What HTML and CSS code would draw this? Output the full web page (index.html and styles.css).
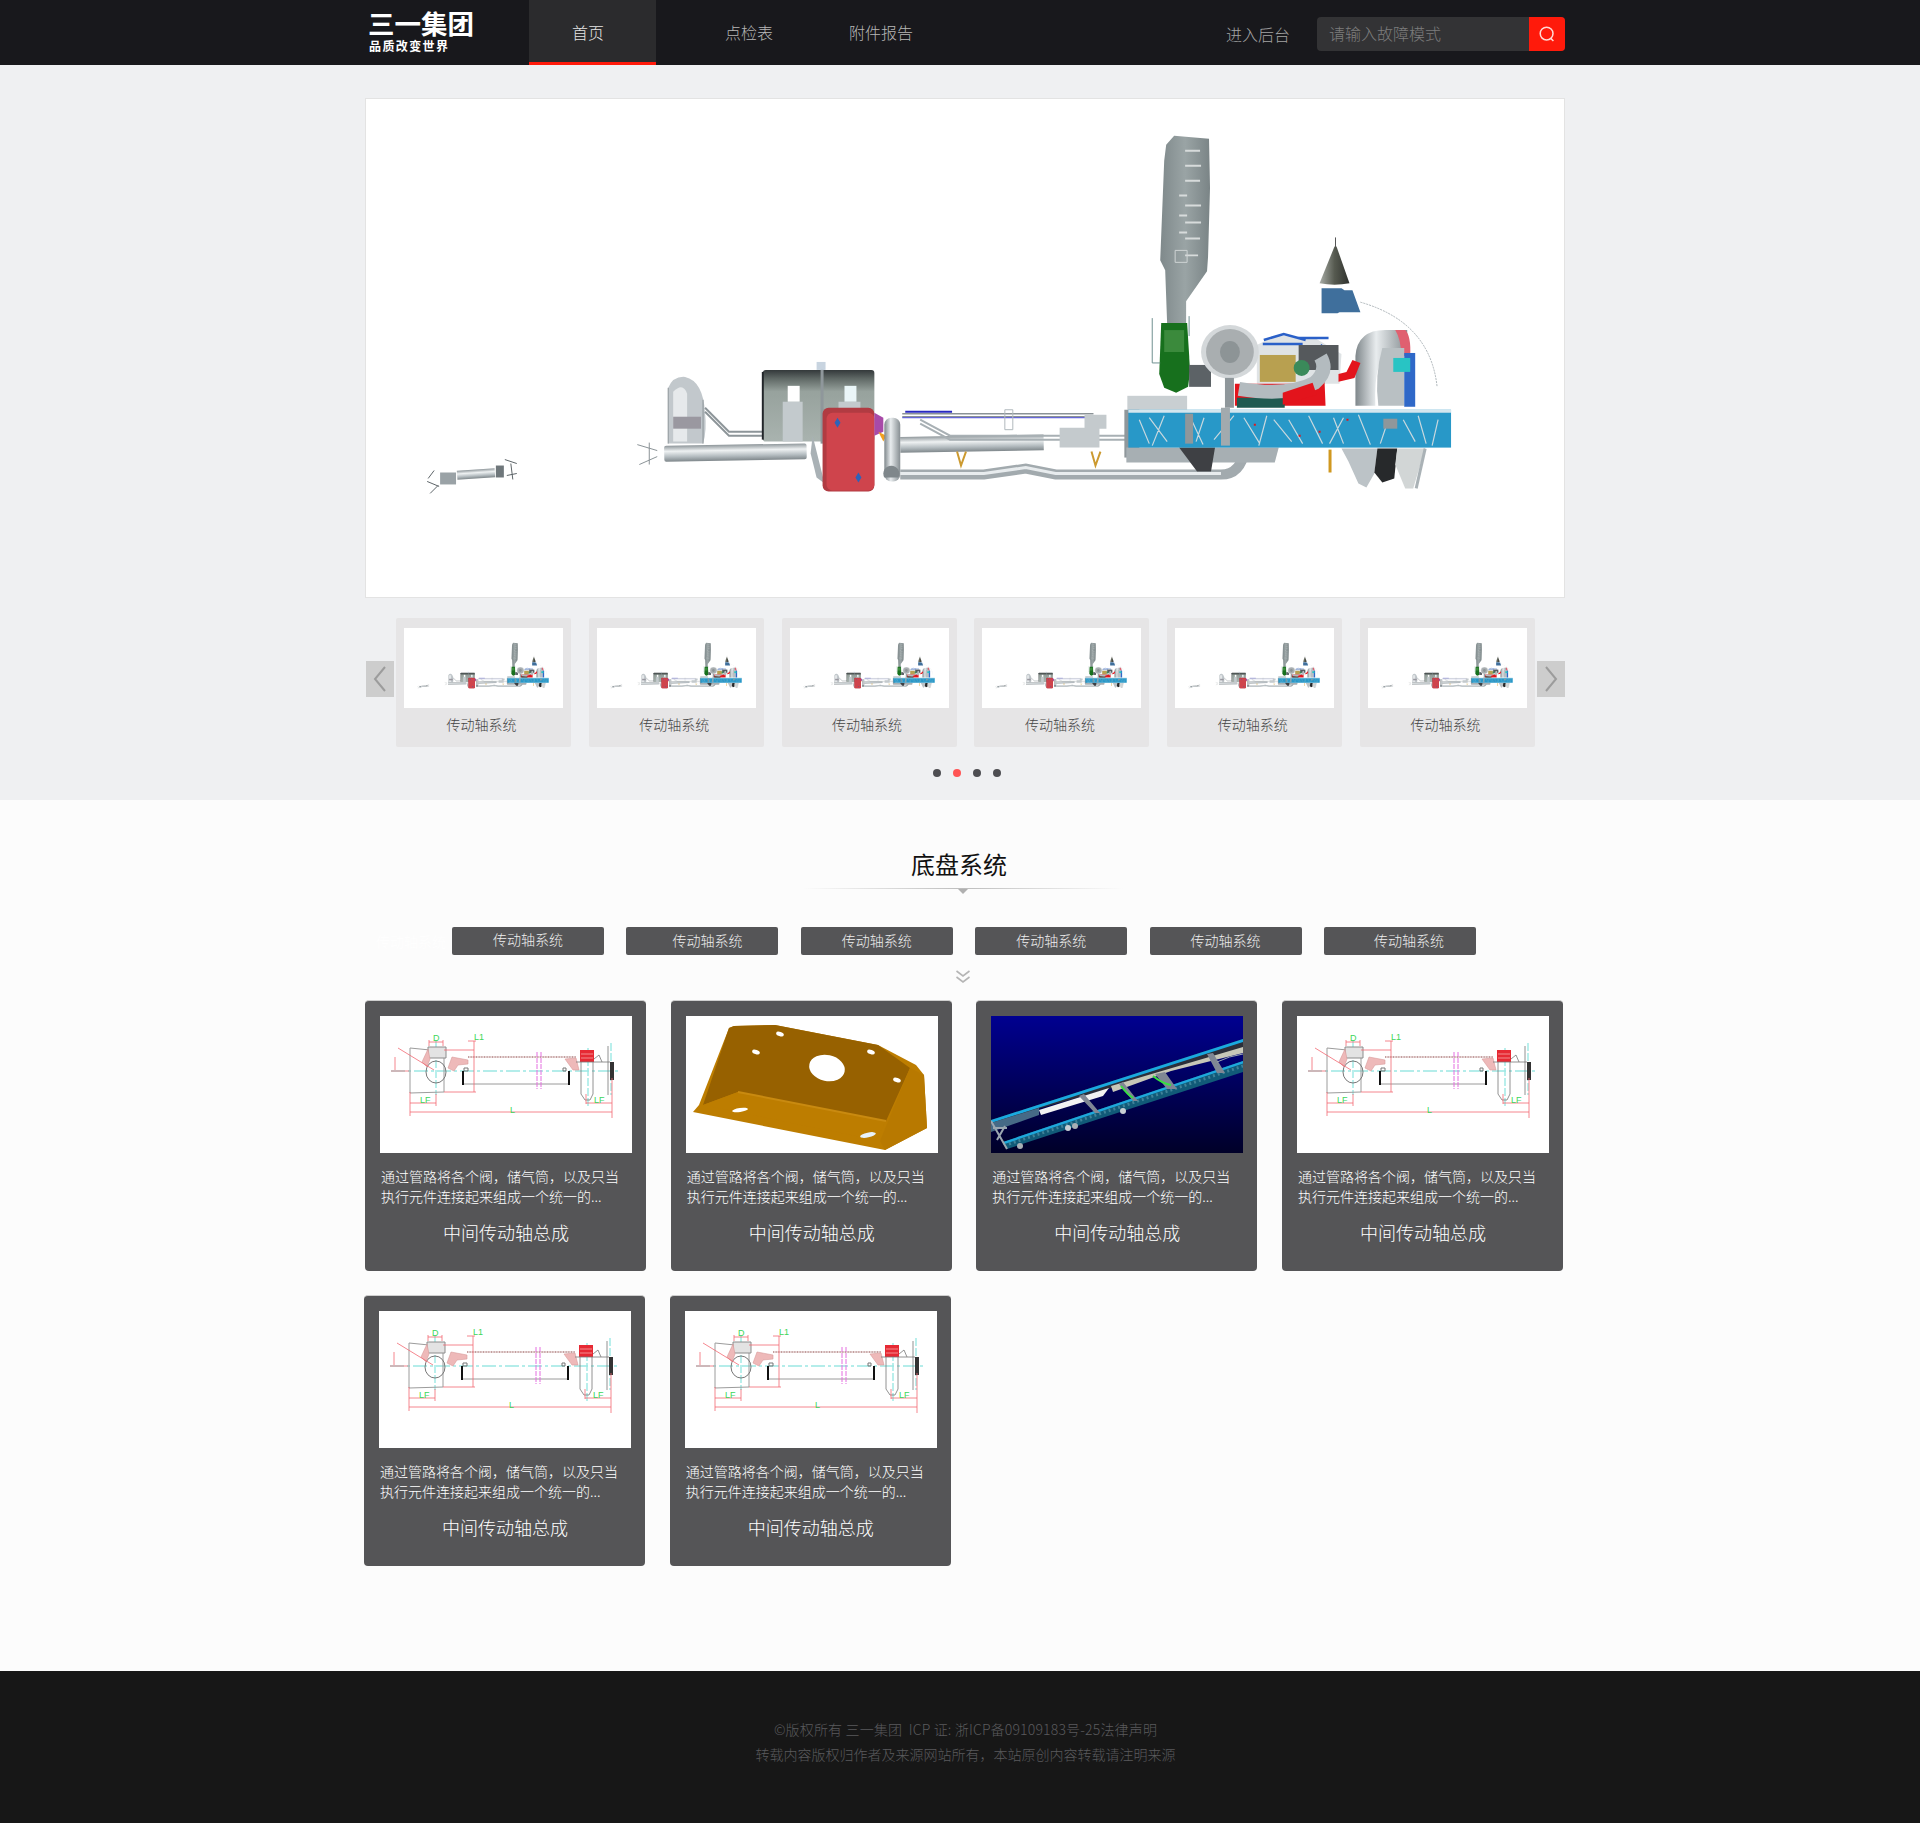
FILE: index.html
```html
<!DOCTYPE html>
<html lang="zh-CN">
<head>
<meta charset="utf-8">
<title>三一集团</title>
<link rel="stylesheet" href="styles.css">
</head>
<body>
<svg class="defs" width="0" height="0" aria-hidden="true">
  <defs>
    <linearGradient id="pipeH" x1="0" y1="0" x2="0" y2="1">
      <stop offset="0" stop-color="#8f979b"/><stop offset=".35" stop-color="#eef1f2"/><stop offset=".7" stop-color="#b4bcc0"/><stop offset="1" stop-color="#7f878b"/>
    </linearGradient>
    <linearGradient id="pipeV" x1="0" y1="0" x2="1" y2="0">
      <stop offset="0" stop-color="#7f878b"/><stop offset=".4" stop-color="#e8ecee"/><stop offset="1" stop-color="#868e92"/>
    </linearGradient>
    <linearGradient id="tank" x1="0" y1="0" x2="0" y2="1">
      <stop offset="0" stop-color="#33383a"/><stop offset=".12" stop-color="#5f6865"/><stop offset=".3" stop-color="#97a29d"/><stop offset="1" stop-color="#a9b3af"/>
    </linearGradient>
    <linearGradient id="stack" x1="0" y1="0" x2="1" y2="0">
      <stop offset="0" stop-color="#7f898b"/><stop offset=".5" stop-color="#9aa4a5"/><stop offset="1" stop-color="#7a8486"/>
    </linearGradient>
    <linearGradient id="cone" x1="0" y1="0" x2="1" y2="0">
      <stop offset="0" stop-color="#a8aca6"/><stop offset=".5" stop-color="#565a50"/><stop offset="1" stop-color="#2f312d"/>
    </linearGradient>
    <linearGradient id="deep" x1="0" y1="0" x2="0" y2="1">
      <stop offset="0" stop-color="#000090"/><stop offset="1" stop-color="#000028"/>
    </linearGradient>

    <symbol id="machine" viewBox="365 98 1200 500">
      <!-- far left shaft -->
      <g fill="none" stroke="#5d6468" stroke-width="1">
        <path d="M425 482l12 5M428 494l8-8M432 471l-6 8M503 460l12 4M515 474l-10 2M509 464l2 16"/>
      </g>
      <rect x="455" y="470" width="38" height="9" fill="url(#pipeH)" transform="rotate(-4 474 474)"/>
      <rect x="438" y="473" width="16" height="12" fill="#9aa2a6"/>
      <rect x="494" y="466" width="8" height="12" fill="#6f777b"/>
      <path d="M636 445l20 6M638 465l18-8M648 443v22" fill="none" stroke="#8a9296"/>
      <!-- fan housing -->
      <path d="M667 388q5-12 17-11q18 4 20 36q2 18-2 31h-35z" fill="#c2c8cc"/>
      <path d="M672 392q10-10 14 2v48h-14z" fill="#e6e9eb"/>
      <rect x="672" y="417" width="28" height="12" fill="#9a98a0"/>
      <path d="M667 388v56M702 400v44" stroke="#8b9397" fill="none"/>
      <path d="M704 408l24 24h74M704 412l24 24h74" fill="none" stroke="#8d9599" stroke-width="2"/>
      <!-- long left tube -->
      <rect x="663" y="445" width="143" height="16" rx="2" fill="url(#pipeH)" transform="rotate(-1 734 453)"/>
      <!-- tank -->
      <rect x="762" y="370" width="112" height="72" rx="3" fill="url(#tank)"/>
      <path d="M762 372v68" stroke="#22262a" stroke-width="2"/>
      <rect x="787" y="386" width="12" height="16" fill="#fff"/>
      <rect x="844" y="386" width="12" height="16" fill="#eaf6f8"/>
      <path d="M782 402h20v40h-20zM838 402h22v40h-22z" fill="#c3cacd"/>
      <rect x="820" y="364" width="3" height="80" fill="#8f979b"/>
      <rect x="816" y="362" width="9" height="8" fill="#c8d4e0"/>
      <!-- red tank -->
      <path d="M812 436l12 48-8-6-6-24z" fill="#a9b1b5"/>
      <rect x="822" y="408" width="52" height="84" rx="6" fill="#b13b42"/>
      <rect x="826" y="413" width="48" height="78" rx="6" fill="#cf444c"/>
      <path d="M874 413l9 5v14l-9 4z" fill="#a84aa8"/>
      <path d="M837 418l3 5-3 5-3-5zM858 473l3 5-3 5-3-5z" fill="#2f62b8"/>
      <path d="M878 432l8 4-3 6z" fill="#f0a020"/>
      <!-- pipes centre -->
      <rect x="900" y="436" width="144" height="16" fill="url(#pipeH)" transform="rotate(-1 972 444)"/>
      <rect x="884" y="418" width="16" height="64" rx="7" fill="url(#pipeV)"/>
      <path d="M884 478a8 8 0 1 1 14 0z" fill="#7f878b"/>
      <path d="M900 475H984L1026 469L1056 475H1222Q1242 475 1246 450" fill="none" stroke="#a2aaae" stroke-width="10"/>
      <path d="M900 474H984L1026 468L1056 474H1222" fill="none" stroke="#e8ecee" stroke-width="3"/>
      <path d="M902 414h192M902 417h192" stroke="#8a9296" stroke-width="1.5" fill="none"/>
      <path d="M902 418h198" stroke="#4a4ad8" fill="none"/>
      <path d="M905 412h47" stroke="#2828c0" stroke-width="2" fill="none"/>
      <path d="M920 420l30 16h180M920 424l30 16h180" fill="none" stroke="#a8b0b4" stroke-width="2"/>
      <path d="M1005 410h8v20h-8z" fill="none" stroke="#b0b8bc"/>
      <path d="M957 452l4 14 5-14M1092 452l4 14 5-14" fill="none" stroke="#cc9a30" stroke-width="2"/>
      <path d="M1060 428h40v20h-40zM1085 415h22v14h-22z" fill="#c4cacd"/>
      <!-- engine block behind frame -->
      <rect x="1128" y="396" width="60" height="14" fill="#c9cfd2"/>
      <rect x="1125" y="410" width="15" height="48" fill="#8f979b"/>
      <path d="M1127 448h153l-4 15h-149z" fill="#a7afb3"/>
      <path d="M1180 448l18 24h14l4-24z" fill="#3e4044"/>
      <!-- stack -->
      <path d="M1165 160l2-16 8-9 35 3 1 49-2 70-1 14-21 30v24h-19l-2-55-5-10z" fill="url(#stack)"/>
      <path d="M1186 150h15M1186 165h16M1186 180h15M1186 205h16M1186 222h16M1186 238h15M1186 255h13M1180 195h8M1180 215h8M1180 232h8" stroke="#d7dbdb" stroke-width="2" fill="none"/>
      <path d="M1176 250h12v12h-12z" fill="none" stroke="#cfd4d4"/>
      <!-- cone and blue box -->
      <path d="M1336 246l2 0 13 37q-15 3-30 0z" fill="url(#cone)"/>
      <path d="M1337 237v10" stroke="#555"/>
      <path d="M1323 288h20l3 2 8 0 8 22h-21l-2 1h-16z" fill="#3f6f9c"/>
      <path d="M1362 302q70 20 77 85" fill="none" stroke="#aab2b6" stroke-dasharray="2 1"/>
      <!-- green -->
      <path d="M1162 323h26l3 48-2 16-12 6-12-5-5-14z" fill="#17701d"/>
      <path d="M1165 330h20v22h-20z" fill="#3b8a3c"/>
      <path d="M1153 318v45h8M1190 316v20" fill="none" stroke="#6f9090"/>
      <!-- radiator arch -->
      <path d="M1357 406v-50q2-26 30-26h22v20h-14q-20 4-18 56z" fill="url(#pipeV)"/>
      <path d="M1397 330h10q6 6 5 26h-9q0-16-6-26z" fill="#e06070"/>
      <path d="M1384 348h22v58h-26q-4-30 4-58z" fill="#b9c0c3"/>
      <rect x="1406" y="353" width="11" height="54" fill="#2f68c8"/>
      <rect x="1395" y="358" width="17" height="14" fill="#28c4c4"/>
      <!-- engine -->
      <path d="M1258 345l20-10 40 4 25 15-2 30h-83z" fill="#dfe3e5"/>
      <path d="M1265 340l20-6 22 6M1300 338h30M1264 344h40M1322 345l14 10" fill="none" stroke="#2a60c8" stroke-width="2.5"/>
      <path d="M1300 345h40v25h-40z" fill="#55595c"/>
      <rect x="1261" y="355" width="36" height="27" fill="#b8a050"/>
      <circle cx="1303" cy="368" r="8" fill="#3a8a5a"/>
      <path d="M1236 384h58l32-2 1 24h-91z" fill="#e3141c"/>
      <path d="M1238 398h48v10h-48z" fill="#1f5a50"/>
      <path d="M1340 382l16-4 6-15-8-3-6 12-8 2z" fill="#e3141c"/>
      <path d="M1240 389q50 8 76-6q14-12 6-26" fill="none" stroke="#b3bbbf" stroke-width="14"/>
      <path d="M1284 393l30-10 4 12-34 10z" fill="#e3141c"/>
      <path d="M1190 365h22v22h-22z" fill="#5c6266"/>
      <ellipse cx="1231" cy="352" rx="29" ry="27" fill="#d4d8da"/>
      <ellipse cx="1231" cy="352" rx="24" ry="23" fill="#a9aeb0"/>
      <ellipse cx="1231" cy="352" rx="10" ry="11" fill="#8d9496"/>
      <rect x="1226" y="378" width="9" height="30" fill="#8f979b"/>
      <!-- blue frame -->
      <rect x="1129" y="410" width="324" height="38" fill="#2898c8"/>
      <rect x="1129" y="410" width="324" height="3" fill="#d4e6ee"/>
      <path d="M1140 420l10 24M1165 416l-12 30M1190 415l14 30M1215 440l20-24M1245 418l16 26M1268 416l-8 30M1290 420l14 24M1310 416l14 28M1335 418l10 26M1360 415l12 30M1390 420l-8 24M1420 416l8 28M1440 420l-6 26M1150 418l18 24M1205 418l-8 24M1275 420l18 22M1345 418l-14 26M1405 420l12 22" stroke="#c9d8de" stroke-width="1.2" fill="none"/>
      <rect x="1186" y="414" width="8" height="30" fill="#8f979b"/>
      <rect x="1222" y="408" width="9" height="38" fill="#a2aaae"/>
      <path d="M1255 425h2M1320 432h2M1348 420h2M1300 436h2" stroke="#e3141c" stroke-width="2"/>
      <rect x="1385" y="419" width="14" height="10" fill="#8f979b"/>
      <!-- under frame -->
      <rect x="1330" y="450" width="3" height="23" fill="#d09820"/>
      <path d="M1343 449h36l-3 25-8 14-8-4-10-22z" fill="#bcc3c7"/>
      <path d="M1379 449h20l-3 30-12 4-8-10z" fill="#27292b"/>
      <path d="M1399 449h28l-12 40-8 0-10-24z" fill="#d2d6d6"/>
      <path d="M1427 449l-9 40" stroke="#aab2b6" stroke-width="3" fill="none"/>
    </symbol>

    <symbol id="drawing" viewBox="0 0 252 137">
      <rect width="252" height="137" fill="#fff"/>
      <path d="M11 55h229" stroke="#9ce8e4" stroke-width="1.4" stroke-dasharray="14 3 3 3" fill="none"/>
      <path d="M56 24v55M231 27v52M208 32v60" stroke="#9ce8e4" stroke-width="1.4" stroke-dasharray="8 2" fill="none"/>
      <path d="M88 41h108" stroke="#c49f9f" stroke-width="2" stroke-dasharray="1 .6" fill="none"/>
      <path d="M82 68h108" stroke="#9a9a9a" fill="none"/>
      <path d="M30 32l20 2M30 32v45M30 77l34-1M64 42v34" stroke="#9c9c9c" fill="none"/>
      <ellipse cx="56" cy="56" rx="10" ry="11" stroke="#777" fill="none"/>
      <path d="M48 31h18v11H48z" fill="#e3e3e3" stroke="#8c8c8c"/>
      <path d="M42 46l6-13 2 10-3 8zM68 52l4-11 16 3v4l-10 1-4 6z" fill="#eeb9b9" stroke="#d89a9a" stroke-width=".6"/>
      <path d="M185 43l11-1 3 12h-6z" fill="#eeb9b9" stroke="#d89a9a" stroke-width=".6"/>
      <path d="M157 36v37M161 36v37" stroke="#e46fe0" stroke-dasharray="5 1" fill="none"/>
      <path d="M82 55h2v14h-2zM188 55h2v14h-2z" fill="#111"/>
      <path d="M84 55v-3h4v3zM183 55v-3h3v3z" fill="none" stroke="#777"/>
      <rect x="200" y="34" width="14" height="12" fill="#e62a34"/>
      <path d="M201 38h12M201 42h12" stroke="#f8b8b8" stroke-width=".7"/>
      <path d="M196 46h34M201 46v32l4 6h5l3-6V46M228 30v49M214 43l5-4 3 7" stroke="#777" stroke-width=".8" fill="none"/>
      <path d="M230 46h4v18h-4z" fill="#333"/>
      <g stroke="#f26872" stroke-width=".8" fill="none">
        <path d="M94 25v51M88 25h8M64 76h32"/>
        <path d="M30 96h202M30 87h26M206 87h26M30 76v24M56 78v12M206 78v10M232 62v40"/>
        <path d="M49 26h14M49 24v6M63 24v6M64 34h30"/>
        <path d="M18 32l36 22M15 41v13M11 55h18"/>
      </g>
      <g class="dim-label">
        <text x="53" y="25">D</text><text x="94" y="24">L1</text>
        <text x="40" y="87">LF</text><text x="214" y="87">LF</text>
        <text x="130" y="97">L</text>
      </g>
    </symbol>

    <symbol id="bracket" viewBox="0 0 252 137">
      <rect width="252" height="137" fill="#fff"/>
      <path d="M43 12L48 10L89 9L192 29L230 49L238 59L241 112L199 134L7 96L13 89z" fill="#bd7d00"/>
      <path d="M43 12L48 10L89 9L192 29L224 52L200 105L52 76L17 89z" fill="#976100"/>
      <path d="M17 89L52 76L200 105L190 124z" fill="#bd7d00"/>
      <path d="M224 52L238 59L241 112L199 134L194 125z" fill="#b87900"/>
      <path d="M52 76L200 105" stroke="#c98a10" fill="none" stroke-width="2"/>
      <ellipse cx="141" cy="52" rx="18" ry="13" fill="#fff" transform="rotate(12 141 52)"/>
      <ellipse cx="94" cy="18" rx="4" ry="2.2" fill="#fff" transform="rotate(20 94 18)"/>
      <ellipse cx="70" cy="36" rx="4" ry="2.2" fill="#fff" transform="rotate(20 70 36)"/>
      <ellipse cx="185" cy="36" rx="4" ry="2.2" fill="#fff" transform="rotate(20 185 36)"/>
      <ellipse cx="211" cy="64" rx="4" ry="2.2" fill="#fff" transform="rotate(20 211 64)"/>
      <ellipse cx="54" cy="94" rx="8" ry="2" fill="#fff" transform="rotate(-8 54 94)"/>
      <ellipse cx="182" cy="119" rx="8" ry="2.4" fill="#e8f2fa" transform="rotate(-12 182 119)"/>
    </symbol>

    <symbol id="chassis" viewBox="0 0 252 137">
      <rect width="252" height="137" fill="url(#deep)"/>
      <path d="M0 104L252 23V34L128 70L50 92L0 110z" fill="#2b2f3a"/>
      <path d="M48 94L118 72L112 80L50 99z" fill="#f2f2f2"/>
      <path d="M120 70L252 31V37L180 55L122 76z" fill="#c7c7b8"/>
      <path d="M0 104L252 23V26L0 107z" fill="#19a9e0"/>
      <path d="M0 107L48 92V99L0 116z" fill="#466a86"/>
      <path d="M12 126L252 45V56L16 133z" fill="#115a78"/>
      <path d="M18 128L252 50" stroke="#3f8299" stroke-width="3" stroke-dasharray="2 3" fill="none"/>
      <path d="M12 126L252 45V47.5L12 128.5z" fill="#1ea8dc"/>
      <path d="M88 80l16 17h5l-16-19zM128 68l14 17h5l-15-19zM164 58l12 15h10l-12-17zM216 38l10 19h8l-12-20z" fill="#7f8794"/>
      <path d="M130 70q6 8 12 12M162 60q10 8 18 9" stroke="#38e040" stroke-width="2" fill="none"/>
      <path d="M0 105l12 21 4 7M2 112h14M14 110l-8 14" stroke="#9aa6b0" stroke-width="2" fill="none"/>
      <path d="M226 46q12-6 26-8" stroke="#9aa6b0" fill="none"/>
      <circle cx="77" cy="112" r="3" fill="#c8cfd4"/><circle cx="84" cy="110" r="3" fill="#a8afb4"/>
      <circle cx="132" cy="95" r="3" fill="#c8cfd4"/><circle cx="29" cy="130" r="3" fill="#a8afb4"/>
    </symbol>
  </defs>
</svg>

<header class="topbar">
  <div class="topbar-in">
    <a class="logo" href="#"><span class="logo-main">三一集团</span><span class="logo-sub">品质改变世界</span></a>
    <nav class="nav">
      <a class="nav-item nav-home is-active" href="#">首页</a>
      <a class="nav-item nav-check" href="#">点检表</a>
      <a class="nav-item nav-report" href="#">附件报告</a>
    </nav>
    <a class="admin" href="#">进入后台</a>
    <form class="search">
      <span class="search-input">请输入故障模式</span>
      <span class="search-btn">
        <svg width="18" height="18" viewBox="0 0 18 18" fill="none" stroke="#ffd9d5" stroke-width="1.5"><circle cx="8.6" cy="8.6" r="6.4"/><path d="M12.8 13.4l2.6 2.6"/></svg>
      </span>
    </form>
  </div>
</header>

<section class="hero">
  <div class="wrap">
    <div class="stage"><svg class="stage-img"><use href="#machine"/></svg></div>
    <div class="strip">
      <button class="arrow" type="button"><svg width="16" height="28" viewBox="0 0 16 28" fill="none" stroke="#9c9c9c" stroke-width="2"><path d="M13 2L3 14l10 12"/></svg></button>
      <div class="thumbs">
        <div class="thumb"><svg class="thumb-img"><use href="#machine" x="6" y="10" width="153" height="64"/></svg><span>传动轴系统</span></div>
        <div class="thumb"><svg class="thumb-img"><use href="#machine" x="6" y="10" width="153" height="64"/></svg><span>传动轴系统</span></div>
        <div class="thumb"><svg class="thumb-img"><use href="#machine" x="6" y="10" width="153" height="64"/></svg><span>传动轴系统</span></div>
        <div class="thumb"><svg class="thumb-img"><use href="#machine" x="6" y="10" width="153" height="64"/></svg><span>传动轴系统</span></div>
        <div class="thumb"><svg class="thumb-img"><use href="#machine" x="6" y="10" width="153" height="64"/></svg><span>传动轴系统</span></div>
        <div class="thumb"><svg class="thumb-img"><use href="#machine" x="6" y="10" width="153" height="64"/></svg><span>传动轴系统</span></div>
      </div>
      <button class="arrow" type="button"><svg width="16" height="28" viewBox="0 0 16 28" fill="none" stroke="#9c9c9c" stroke-width="2"><path d="M3 2l10 12L3 26"/></svg></button>
    </div>
    <div class="dots"><i></i><i class="on"></i><i></i><i></i></div>
  </div>
</section>

<main class="system">
  <h1 class="sys-title">底盘系统</h1>
  <div class="sys-rule"></div>
  <div class="tabs wrap">
    <span class="ghost">传动轴系统</span>
    <div class="tab-list">
      <a class="tab tab-first" href="#">传动轴系统</a>
      <a class="tab tab-nudge" href="#">传动轴系统</a>
      <a class="tab" href="#">传动轴系统</a>
      <a class="tab" href="#">传动轴系统</a>
      <a class="tab" href="#">传动轴系统</a>
      <a class="tab tab-nudge-far" href="#">传动轴系统</a>
    </div>
  </div>
  <div class="more"><svg width="16" height="14" viewBox="0 0 16 14" fill="none" stroke="#b5b5b5" stroke-width="1.6"><path d="M1.5 1l6.5 5 6.5-5M1.5 7l6.5 5 6.5-5"/></svg></div>

  <div class="cards wrap">
    <article class="card"><svg class="card-img"><use href="#drawing"/></svg><p>通过管路将各个阀，储气筒，以及只当执行元件连接起来组成一个统一的...</p><h3>中间传动轴总成</h3></article>
    <article class="card"><svg class="card-img"><use href="#bracket"/></svg><p>通过管路将各个阀，储气筒，以及只当执行元件连接起来组成一个统一的...</p><h3>中间传动轴总成</h3></article>
    <article class="card"><svg class="card-img"><use href="#chassis"/></svg><p>通过管路将各个阀，储气筒，以及只当执行元件连接起来组成一个统一的...</p><h3>中间传动轴总成</h3></article>
    <article class="card"><svg class="card-img"><use href="#drawing"/></svg><p>通过管路将各个阀，储气筒，以及只当执行元件连接起来组成一个统一的...</p><h3>中间传动轴总成</h3></article>
  </div>
  <div class="cards cards-second wrap">
    <article class="card"><svg class="card-img"><use href="#drawing"/></svg><p>通过管路将各个阀，储气筒，以及只当执行元件连接起来组成一个统一的...</p><h3>中间传动轴总成</h3></article>
    <article class="card"><svg class="card-img"><use href="#drawing"/></svg><p>通过管路将各个阀，储气筒，以及只当执行元件连接起来组成一个统一的...</p><h3>中间传动轴总成</h3></article>
  </div>
</main>

<footer class="footer">
  <p class="footer-first">©版权所有 三一集团&nbsp; ICP 证: 浙ICP备09109183号-25法律声明</p>
  <p>转载内容版权归作者及来源网站所有，本站原创内容转载请注明来源</p>
</footer>
</body>
</html>
```

FILE: styles.css
```css
* { box-sizing: border-box; }
html, body { margin: 0; padding: 0; }
body {
  background: #fcfcfc;
  color: #333;
  font-family: "Noto Sans CJK SC", "Noto Sans", sans-serif;
  font-weight: 300;
  font-size: 14px;
}
a { color: inherit; text-decoration: none; }
.defs { display: block; height: 0; }
.wrap { width: 1200px; margin-left: 365px; }

/* header */
.topbar { height: 65px; background: #18181c; }
.topbar-in { width: 1200px; margin-left: 365px; height: 65px; display: flex; align-items: stretch; }
.logo { width: 164px; padding: 9px 0 0 3px; color: #fff; display: flex; flex-direction: column; }
.logo-main { font-size: 26.5px; line-height: 28px; font-weight: 700; }
.logo-sub { font-size: 12px; line-height: 14px; margin-top: 2px; font-weight: 700; letter-spacing: 1.4px; padding-left: 1px; }
.nav { display: flex; flex: none; }
.nav-item { display: block; height: 65px; line-height: 64px; color: #b7b7b7; font-size: 16px; }
.nav-home { width: 127px; padding-left: 43px; background: #2b2b2d; border-bottom: 3px solid #ff1a0b; color: #e4e4e4; }
.nav-check { width: 125px; padding-left: 69px; }
.nav-report { width: 120px; padding-left: 68px; white-space: nowrap; }
.admin { margin-left: 325px; width: 90px; line-height: 68px; color: #a4a4a4; font-size: 16px; white-space: nowrap; flex: none; }
.search { margin: 17px 0 0 1px; width: 248px; height: 34px; display: flex; background: #333335; border-radius: 4px; overflow: hidden; flex: none; }
.search-input { flex: 1; padding-left: 12px; line-height: 33px; color: #7d7d7d; font-size: 16px; }
.search-btn { width: 36px; background: #ff1a0b; display: flex; align-items: center; justify-content: center; }

/* hero */
.hero { height: 735px; padding-top: 33px; background: #eff0f2; }
.stage { height: 500px; background: #fff; border: 1px solid #e3e3e3; }
.stage-img { display: block; width: 1198px; height: 498px; }
.strip { margin-top: 20px; padding-left: 1px; height: 129px; display: flex; gap: 2px; align-items: flex-start; }
.arrow { width: 28px; height: 36px; margin-top: 43px; padding: 0; border: 0; background: #cdcdcd; display: flex; align-items: center; justify-content: center; flex: none; }
.thumbs { display: flex; gap: 17.8px; flex: none; }
.thumb { width: 175px; height: 129px; padding: 10px 8px 0; background: #e6e5e6; border-radius: 2px; text-align: center; color: #444; font-size: 14px; }
.thumb-img { display: block; width: 159px; height: 80px; background: #fff; }
.thumb span { display: block; margin-top: 6px; padding-right: 4px; line-height: 20px; }
.dots { margin-top: 22px; padding-left: 568px; display: flex; gap: 12px; }
.dots i { width: 8px; height: 8px; border-radius: 50%; background: #4e4e52; }
.dots i.on { background: #ff5555; }

/* system */
.system { height: 871px; background: #fcfcfc; padding-top: 48px; }
.sys-title { margin: 0 0 0 911px; font-size: 24px; line-height: 32px; font-weight: 400; color: #111; }
.sys-rule { position: relative; width: 320px; height: 1px; margin: 8px 0 0 803px; background: linear-gradient(90deg, #fcfcfc, #bdbdbd 50%, #fcfcfc); }
.sys-rule::after { content: ""; position: absolute; left: 155px; top: 1px; border: 5px solid transparent; border-top-color: #b0b0b0; border-bottom: 0; }
.tabs { margin-top: 38px; display: flex; height: 28px; }
.ghost { width: 87px; padding-left: 11px; line-height: 28px; color: #fff; white-space: nowrap; flex: none; }
.tab-list { display: flex; gap: 22.4px; }
.tab { width: 152px; height: 28px; line-height: 27px; background: #555557; border-radius: 2px; color: #efefef; text-align: center; font-size: 14px; }
.tab-first { line-height: 25px; }
.tab-nudge { padding-left: 10px; }
.tab-nudge-far { padding-left: 18px; }
.more { margin: 15px 0 0 955px; height: 14px; line-height: 0; }
.more svg { display: block; }
.cards { margin-top: 16px; display: grid; grid-template-columns: repeat(4, 281px); column-gap: 24.67px; }
.cards-second { margin-top: 24px; margin-left: 364px; }
.card { height: 271px; padding: 15px 15px 0; background: #555557; border-radius: 4px; border-top: 1px solid #cfcfcf; color: #fff; }
.card-img { display: block; width: 252px; height: 137px; background: #fff; }
.card p { margin: 13px 0 0; padding-left: 1px; line-height: 20px; font-size: 14px; color: #fff; }
.card h3 { margin: 13px 0 0; padding-left: 1px; line-height: 27px; font-size: 18px; font-weight: 300; text-align: center; color: #fff; }
.dim-label { font-family: "Liberation Sans", sans-serif; font-size: 9px; fill: #3dd65a; }

/* footer */
.footer { height: 152px; padding-top: 46px; background: #171717; color: #5a5a5d; font-size: 14px; text-align: center; }
.footer p { margin: 0; line-height: 25px; padding-left: 11px; }
.footer-first { letter-spacing: .17px; }
```
